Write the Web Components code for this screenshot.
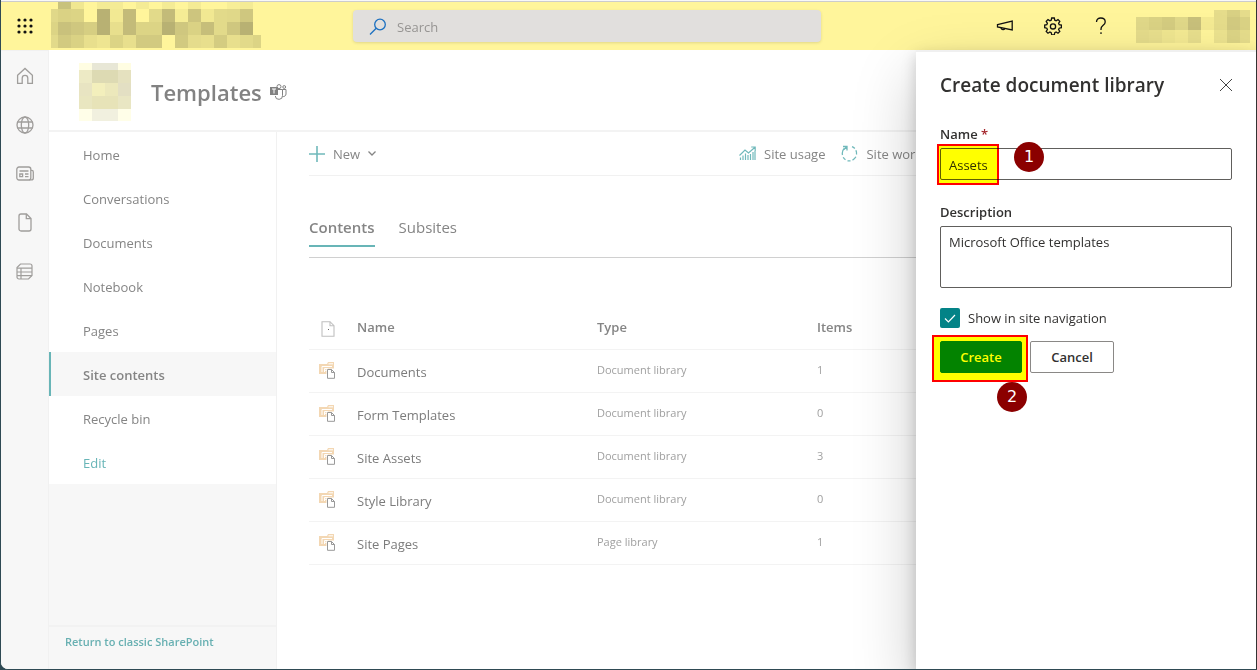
<!DOCTYPE html>
<html lang="en">
<head>
<meta charset="utf-8">
<title>Site contents - Templates</title>
<style>
  html, body { height: 100%; margin: 0; }
  body { background: #2f4a54; font: 13px/20px "Open Sans", "Noto Sans", sans-serif; color: #333; overflow: hidden; }
</style>
</head>
<body>
<sp-app></sp-app>

<script>
const define = (name, html, setup) => customElements.define(name, class extends HTMLElement {
  constructor() {
    super();
    const t = document.createElement('template');
    t.innerHTML = '<style>*{box-sizing:border-box}</style>' + html;
    this.attachShadow({ mode: 'open' }).append(t.content.cloneNode(true));
  }
  connectedCallback() { if (setup) setup(this, this.shadowRoot); }
});

/* ---------- icons ---------- */
const icons = {
  waffle: [16, 16, [0, 6, 12].map(y => [0, 6, 12].map(x => `<circle cx="${x + 2}" cy="${y + 2}" r="1.6" fill="currentColor"/>`).join('')).join('')],
  search: [18, 18, '<circle cx="11" cy="6.5" r="5.3"/><path d="M7.2 10.3 1 16.5"/>', 1.3],
  megaphone: [18, 14, '<path d="M1.500 5.600 16.200 2v9L1.500 8z"/><path d="M5 8.700c.2 2.200 3.500 2.400 3.800 .8"/>', 1.3],
  gear: [18, 18, '<path d="M7.700 1h2.600l.5 2.200 1.300.6 1.900-1.200 1.800 1.800-1.200 1.900.6 1.300 2.200.5v2.600l-2.200.5-.6 1.300 1.200 1.900-1.800 1.800-1.900-1.200-1.300.6-.5 2.200H7.700l-.5-2.200-1.300-.6L4 16.200l-1.800-1.800 1.200-1.900-.6-1.300L.7 10.700V8.100l2.100-.5.6-1.300L2.200 4.400 4 2.600l1.900 1.200 1.300-.6z"/><circle cx="9" cy="9.400" r="2.600"/>', 1.3],
  help: [12, 18, '<path d="M1.500 5C1.500 2.500 3.300 1 5.800 1s4.400 1.500 4.400 3.900c0 3.200-4.200 3.700-4.200 7v1"/><path d="M6 15.300v1.700"/>', 1.3],
  home: [18, 18, '<path d="M1.600 8.200 9 1.400l7.400 6.800v8.200h-4.600v-5.200a2.800 2.800 0 0 0-5.600 0v5.200H1.600z"/>', 1.3],
  globe: [18, 18, '<circle cx="9" cy="9" r="8"/><ellipse cx="9" cy="9" rx="3.700" ry="8"/><path d="M1.500 6h15M1.500 12h15"/>', 1.3],
  news: [18, 15, '<rect x=".8" y="1" width="14" height="13" rx="2.200"/><path d="M15 4.400h.8a1.500 1.500 0 0 1 1.500 1.500v6a2 2 0 0 1-2 2H13M3.500 5h9M9 8h3.500M9 10.700h3.500"/><path d="M3.800 8h2.800v2.700H3.800z"/>', 1.3],
  file: [14, 19, '<path d="M3 1h5.500L13 5.500V16a2 2 0 0 1-2 2H3a2 2 0 0 1-2-2V3a2 2 0 0 1 2-2z"/><path d="M8.300 1v4.700H13"/>', 1.3],
  list: [17, 17, '<path d="M4.500 1H14a2 2 0 0 1 2 2v9.500L12.500 16H3a2 2 0 0 1-2-2V4.500z"/><path d="M1 5.200h15M1 9h15M1 12.600h15M5 5.200V16"/>', 1.2],
  plus: [16, 16, '<path d="M8 0v16M0 8h16" />', 1.6],
  chevron: [8, 5, '<path d="m.5 .5 3.500 3.500L7.500 .5"/>', 1.3],
  chart: [17, 15, '<path d="M1.500 14v-2.500M4 14v-4.500M6.500 14V7.500M9 14V9M11.500 14V8M14 14V6M16 14V5"/><path d="M.5 9.500 6 4l3.500 3L16 1.200M12.200 1h4v4"/>', 1.2],
  flow: [17, 17, '<path d="M3.400 3.300A7.300 7.300 0 0 0 1.500 10" /><path d="M2.200 12.300a7.300 7.300 0 0 0 2.300 2.500M6.500 15.800h3M11.500 15.100c1.600-.8 2.600-1.900 3.400-3.300M15.500 9.500c.3-1.500 0-3-.6-4.300M13.800 3.500c-.8-.9-1.700-1.500-2.800-1.900"/><path d="M2 1.500h4v4M6 1.500 3 4.500"/>', 1.3],
  close: [14, 14, '<path d="m1 1 12 12M13 1 1 13"/>', 1],
  page: [14, 16, '<path d="M1 .7h8l4 4v10.600H1z"/><path d="M9 .7v4h4"/><path d="M7 8.500h1" stroke="#666"/>', 1.1],
  library: [17, 17, '<path d="M0 2h8l1-2h6v12H0z" fill="#f3d7b3" stroke="none"/><path d="M9.500 1.800h4.500" stroke="#fff"/><path d="M3 10V4.500h10M5.500 10V6.500h3v3.500M5.500 8.300h3" stroke="#fff"/><path d="M7.500 6.500h8.500V17H7.500z" fill="#fff" stroke="none"/><path d="M8.500 7.500h4l3 3v5.800h-7z" fill="#fff"/><path d="M12.500 7.500v3h3"/>', 1],
  teams: [17, 16, '<path d="M0 3h8v8H0z" fill="currentColor" stroke="none"/><path d="M2 5h4M4 5v4.500" stroke="#fff"/><circle cx="9" cy="2.600" r="2"/><circle cx="14.200" cy="3" r="1.400"/><path d="M8 5.500h4.500v6a3.600 3.600 0 0 1-7.200.5M12.500 5.500H16v4.500a2.600 2.600 0 0 1-3.500 2.400"/>', 1],
  check: [12, 9, '<path d="m1 4.500 3.400 3.400L11 1"/>', 1.2]
};
define('sp-icon', `<style>:host{display:inline-flex;flex:none}svg{display:block}</style>`, (el, root) => {
  const icon = icons[el.getAttribute('name')];
  if (!icon || root.querySelector('svg')) return;
  const [w, h, body, sw = 0] = icon;
  root.append(document.createRange().createContextualFragment(
    `<svg xmlns="http://www.w3.org/2000/svg" width="${w}" height="${h}" viewBox="0 0 ${w} ${h}" fill="none" stroke="currentColor" stroke-width="${sw}" aria-hidden="true">${body}</svg>`));
});

/* ---------- mosaics that stand in for private names and pictures ---------- */
const mosaics = {
  brand: { x: [0, 7, 20, 33, 46, 59, 72, 85, 98, 111, 124, 137, 150, 163, 176, 189, 202, 210], y: [0, 7, 20, 33, 46], rows: [
    '- c8c27c f0e791 - f4eb95 f4eb95 - f4eb95 - f4eb95 - f4eb95 - - f7ee97 f4eb95 -',
    'e0d889 dad284 dcd485 - b8b173 f2e993 c3bb79 - e2da8a c3bb79 f5ec95 cdc57e f1e892 e2da8a e0d889 cfc77f -',
    'dcd485 c9c17c cfc77f d6ce82 b8b173 e8df8d c3bb79 dcd485 dcd485 b8b173 cfc77f dad284 c6be7a e2da8a cfc77f b8b173 -',
    'e2da8a d2ca80 dad284 e8df8d eee591 dcd485 e8df8d d2ca80 d2ca80 - d2ca80 e5dc8c e8df8d d4cc81 e8df8d e2da8a dcd485'] },
  user: { x: [0, 13, 26, 39, 52, 65, 78, 91, 104, 114], y: [0, 7, 20, 33], rows: [
    '- - - - - - e5dc8b d8d083 e5dc8b',
    'e0d889 dad284 d4cc80 e0d889 c8c07b f4ea93 e5dc8b d2ca80 dad284',
    'e5dc8b e8df8d efe690 f4ea93 e8df8d - ece38f dcd485 e5dc8b'] },
  logo: { x: [0, 13, 26, 39, 52], y: [0, 7, 20, 33, 46, 58], rows: [
    'fffde2 e8e7d6 e8e7d6 fffde2', 'edeac5 dddab3 dddab3 e5e1bf', 'e8e4c2 f3efbc ece8bb e3dfc3', 'e9e6c0 e7e3b8 e7e3b8 e9e6c3', 'fffee8 f1f0df f1f0df fffee8'] }
};
define('sp-mosaic', `<style>:host{display:block;flex:none}svg{display:block}</style>`, (el, root) => {
  if (root.querySelector('svg')) return;
  const { x, y, rows } = mosaics[el.getAttribute('name')];
  const cells = rows.map((r, j) => r.split(' ').map((c, i) => c === '-' ? '' :
    `<rect x="${x[i]}" y="${y[j]}" width="${x[i + 1] - x[i]}" height="${y[j + 1] - y[j]}" fill="#${c}"/>`).join('')).join('');
  root.append(document.createRange().createContextualFragment(
    `<svg xmlns="http://www.w3.org/2000/svg" width="${x.at(-1)}" height="${y.at(-1)}" shape-rendering="crispEdges" aria-hidden="true">${cells}</svg>`));
});

/* ---------- suite header ---------- */
define('suite-header', `
<style>
  :host { display: flex; flex: none; height: 48px; background: #fff59b; color: #111; }
  button { border: 0; background: none; padding: 0; width: 48px; height: 48px; display: flex; align-items: center; justify-content: center; color: inherit; }
  .start { flex: 0 0 352px; display: flex; }
  .start sp-mosaic { margin-left: 2px; }
  label { flex: 1; max-width: 468px; height: 32px; margin-top: 8px; display: flex; align-items: center; gap: 10px; padding: 2px 16px 0; background: #e1dfdd; border-radius: 4px; box-shadow: 0 1px 3px rgba(0,0,0,.12); color: #1c70c0; }
  input { flex: 1; min-width: 0; border: 0; padding: 0; background: none; outline: 0; font: inherit; }
  input::placeholder { color: #979593; opacity: 1; }
  .end { margin-left: auto; display: flex; align-items: center; padding-right: 6px; }
  .end sp-mosaic { margin-left: 11px; }
</style>
<div class="start"><button aria-label="App launcher"><sp-icon name="waffle"></sp-icon></button><sp-mosaic name="brand"></sp-mosaic></div>
<label><sp-icon name="search"></sp-icon><input type="search" placeholder="Search" aria-label="Search"></label>
<div class="end">
  <button aria-label="What's new"><sp-icon name="megaphone"></sp-icon></button>
  <button aria-label="Settings"><sp-icon name="gear"></sp-icon></button>
  <button aria-label="Help"><sp-icon name="help"></sp-icon></button>
  <sp-mosaic name="user"></sp-mosaic>
</div>`);

/* ---------- app rail ---------- */
define('app-rail', `
<style>
  :host { display: flex; flex-direction: column; flex: 0 0 48px; background: #f7f7f7; border-right: 1px solid #f1f1f1; border-top: 1px solid #f1f1f1; color: #a09e9c; }
  a { height: 49px; display: flex; align-items: center; justify-content: center; color: inherit; }
</style>
<a href="#" aria-label="Home"><sp-icon name="home"></sp-icon></a>
<a href="#" aria-label="Sites"><sp-icon name="globe"></sp-icon></a>
<a href="#" aria-label="News"><sp-icon name="news"></sp-icon></a>
<a href="#" aria-label="Files"><sp-icon name="file"></sp-icon></a>
<a href="#" aria-label="Lists"><sp-icon name="list"></sp-icon></a>`);

/* ---------- site header ---------- */
define('site-header', `
<style>
  :host { display: flex; flex: none; align-items: center; height: 82px; padding: 4px 30px 0; border-bottom: 2px solid #f3f3f3; color: #828282; }
  h1 { margin: 0 8px 0 20px; font: 600 22px/32px "Open Sans", sans-serif; }
</style>
<sp-mosaic name="logo"></sp-mosaic><h1><slot></slot></h1><sp-icon name="teams"></sp-icon>`);

/* ---------- left navigation ---------- */
define('nav-item', `
<style>
  :host { display: block; background: #fff; }
  a { display: flex; align-items: center; height: 44px; padding: 2px 0 0 32px; border-left: 2px solid transparent; color: #858585; text-decoration: none; }
  :host([selected]) a { background: #f7f7f7; border-color: #68b5b7; font-weight: 600; }
  :host([action]) a { color: #68b5b7; }
</style>
<a href="#"><slot></slot></a>`);
define('site-nav', `
<style>
  :host { display: flex; flex-direction: column; flex: 0 0 228px; background: #f7f7f7; border-right: 1px solid #f1f1f1; }
  footer { margin-top: auto; height: 44px; padding: 5px 16px; border-top: 2px solid #f2f2f2; font-size: 11px; font-weight: 600; }
  footer a { color: #68b0b2; text-decoration: none; }
</style>
<nav><slot></slot></nav><footer><a href="#">Return to classic SharePoint</a></footer>`);

/* ---------- command bar ---------- */
define('command-button', `
<style>
  :host { display: block; }
  button { display: flex; align-items: center; gap: 8px; border: 0; padding: 0; background: none; font: inherit; color: #858585; }
  sp-icon { color: #70b9bb; }
  .chev { color: #858585; }
</style>
<button><slot></slot></button>`, (el, root) => {
  const button = root.querySelector('button');
  if (button.querySelector('sp-icon')) return;
  button.insertAdjacentHTML('afterbegin', `<sp-icon name="${el.getAttribute('icon')}"></sp-icon>`);
  if (el.hasAttribute('menu')) button.insertAdjacentHTML('beforeend', '<sp-icon class="chev" name="chevron"></sp-icon>');
});
define('command-bar', `
<style>
  :host { display: flex; align-items: center; height: 44px; gap: 16px; padding-right: 302px; border-bottom: 1px solid #f1f1f1; }
  .gap { flex: 1; }
</style>
<command-button icon="plus" menu>New</command-button><span class="gap"></span>
<command-button icon="chart">Site usage</command-button><command-button icon="flow">Site workflows</command-button>`);

/* ---------- tabs ---------- */
define('tab-strip', `
<style>
  :host { display: flex; gap: 24px; margin-top: 40px; height: 42px; border-bottom: 1px solid #d0d0d0; }
  button { height: 31px; border: 0; border-bottom: 2px solid transparent; background: none; padding: 0 0 7px; font: 15px/22px "Open Sans", sans-serif; color: #858585; }
  [aria-selected=true] { border-color: #68b5b7; font-weight: 600; }
</style>
<button role="tab" aria-selected="true">Contents</button><button role="tab" aria-selected="false">Subsites</button>`);

/* ---------- list of libraries ---------- */
define('library-table', `
<style>
  :host { display: block; margin-top: 48px; }
  table { width: 100%; border-collapse: collapse; table-layout: fixed; }
  th, td { height: 43px; padding: 0; text-align: left; border-bottom: 1px solid #f3f3f3; color: #a0a0a0; font-size: 11px; }
  th { font-size: 13px; font-weight: 600; color: #858585; }
  td { padding-bottom: 2px; }
  td:nth-child(2) { font-size: 13px; padding: 2px 0 0; }
  th sp-icon { margin-left: 12px; color: #c0c0c0; vertical-align: middle; }
  td sp-icon { margin-left: 10px; color: #999; vertical-align: middle; }
  a { color: #7c7c7c; text-decoration: none; }
  .i { width: 48px; } .n { width: 240px; } .t { width: 220px; }
</style>
<table>
  <colgroup><col class="i"><col class="n"><col class="t"><col></colgroup>
  <thead><tr><th><sp-icon name="page"></sp-icon></th><th>Name</th><th>Type</th><th>Items</th></tr></thead>
  <tbody></tbody>
</table>`, (el, root) => {
  root.querySelector('tbody').innerHTML = [
    ['Documents', 'Document library', 1], ['Form Templates', 'Document library', 0], ['Site Assets', 'Document library', 3],
    ['Style Library', 'Document library', 0], ['Site Pages', 'Page library', 1]
  ].map(([n, t, c]) => `<tr><td><sp-icon name="library"></sp-icon></td><td><a href="#">${n}</a></td><td>${t}</td><td>${c}</td></tr>`).join('');
});

/* ---------- step markers drawn over the form ---------- */
define('step-frame', `
<style>
  :host { position: absolute; mix-blend-mode: multiply; background: #ff0; border: 2px solid #f00; pointer-events: none; box-sizing: border-box; }
</style>`);
define('step-badge', `
<style>
  :host { position: absolute; display: flex; align-items: center; justify-content: center; width: 30px; height: 30px; border-radius: 50%; background: #8b0000; color: #fff; font: 16px/20px "DejaVu Sans", sans-serif; }
</style><slot></slot>`);

/* ---------- create panel ---------- */
define('create-panel', `
<style>
  :host { display: block; position: absolute; top: 50px; right: 0; bottom: 0; width: 340px; background: #fff; border-top: 2px solid #f0f0f0; padding: 20px 24px; box-sizing: border-box; box-shadow: 0 26px 58px rgba(0,0,0,.22), 0 5px 14px rgba(0,0,0,.18); color: #323130; }
  header { display: flex; justify-content: space-between; align-items: center; height: 28px; }
  h2 { margin: 0; font: 600 19px/26px "Open Sans", sans-serif; padding-bottom: 2px; }
  header button { border: 0; padding: 0; background: none; color: #444; margin-right: -1px; }
  .label { display: block; font-weight: 600; line-height: 20px; margin: 22px 0 4px; }
  header + .label { margin-top: 24px; }
  .req { color: #a4262c; }
  .field { position: relative; }
  input[type=text], textarea { display: block; width: 100%; height: 32px; padding: 2px 8px 0; margin: 0; border: 1px solid #605e5c; border-radius: 2px; background: #fff; font: inherit; color: inherit; outline: 0; resize: none; }
  textarea { height: 62px; padding-top: 5px; }
  .name { top: -4px; left: -3px; width: 62px; height: 41px; }
  .one { top: -6px; left: 74px; }
  .tick { display: flex; align-items: center; gap: 8px; margin-top: 20px; height: 20px; }
  .box { position: relative; width: 20px; height: 20px; display: grid; place-items: center; color: #fff; }
  .box > * { grid-area: 1 / 1; }
  .box sp-icon { z-index: 1; pointer-events: none; }
  .box input { appearance: none; width: 20px; height: 20px; margin: 0; background: #038387; border-radius: 2px; }
  .actions { position: relative; display: flex; gap: 8px; margin-top: 13px; }
  .actions button { height: 32px; width: 84px; padding: 0; font: 600 13px/20px "Open Sans", sans-serif; border: 1px solid #8a8886; border-radius: 2px; background: #fff; color: #323130; }
  .actions .primary { width: 82px; background: #038387; border-color: #038387; color: #fff; }
  .create { top: -6px; left: -8px; width: 96px; height: 47px; }
  .two { top: 41px; left: 57px; }
</style>
<header><h2>Create document library</h2><button aria-label="Close"><sp-icon name="close"></sp-icon></button></header>
<label class="label" for="n">Name <span class="req">*</span></label>
<div class="field"><input id="n" type="text" value="Assets"><step-frame class="name"></step-frame><step-badge class="one">1</step-badge></div>
<label class="label" for="d">Description</label>
<div class="field"><textarea id="d">Microsoft Office templates</textarea></div>
<label class="tick"><span class="box"><input type="checkbox" checked><sp-icon name="check"></sp-icon></span>Show in site navigation</label>
<div class="actions"><button class="primary">Create</button><button>Cancel</button><step-frame class="create"></step-frame><step-badge class="two">2</step-badge></div>`);

/* ---------- page ---------- */
define('sp-app', `
<style>
  :host { position: relative; display: flex; flex-direction: column; height: 100vh; box-sizing: border-box; border: solid #2f4a54; border-width: 0 1px 1px; border-right-color: #333; border-bottom-left-radius: 8px; background: #fff; overflow: hidden; }
  .edge { flex: none; height: 2px; background: #f8f8f8; border-bottom: 1px solid #ccc; }
  .row { flex: 1; display: flex; min-height: 0; }
  .site { flex: 1; min-width: 0; display: flex; flex-direction: column; }
  main { flex: 1; min-width: 0; padding-left: 32px; }
</style>
<div class="edge"></div>
<suite-header></suite-header>
<div class="row">
  <app-rail></app-rail>
  <div class="site">
    <site-header>Templates</site-header>
    <div class="row">
      <site-nav>
        <nav-item>Home</nav-item><nav-item>Conversations</nav-item><nav-item>Documents</nav-item><nav-item>Notebook</nav-item>
        <nav-item>Pages</nav-item><nav-item selected>Site contents</nav-item><nav-item>Recycle bin</nav-item><nav-item action>Edit</nav-item>
      </site-nav>
      <main><command-bar></command-bar><tab-strip></tab-strip><library-table></library-table></main>
    </div>
  </div>
</div>
<create-panel></create-panel>`);
</script>
</body>
</html>
